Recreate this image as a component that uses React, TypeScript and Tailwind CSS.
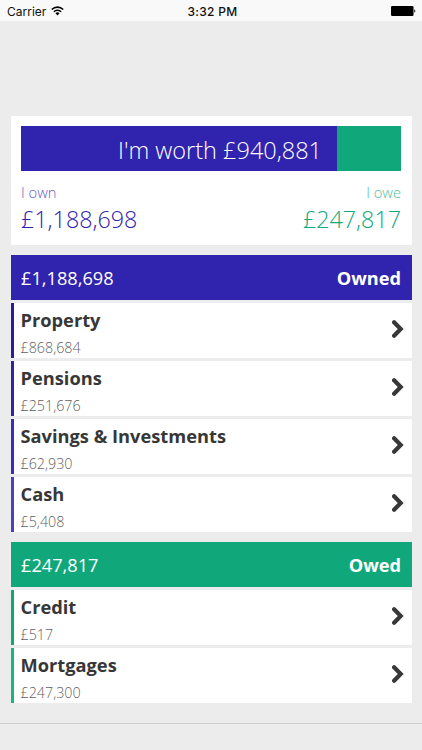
interface Item {
  name: string
  amount: string
  accent: string
}

interface SectionProps {
  total: string
  title: string
  color: string
  items: Item[]
}

const owned: Item[] = [
  { name: "Property", amount: "£868,684", accent: "border-[#2a1c9e]" },
  { name: "Pensions", amount: "£251,676", accent: "border-[#2f21ac]" },
  { name: "Savings & Investments", amount: "£62,930", accent: "border-[#3a2cba]" },
  { name: "Cash", amount: "£5,408", accent: "border-[#4b3fc6]" },
]

const owed: Item[] = [
  { name: "Credit", amount: "£517", accent: "border-[#10a676]" },
  { name: "Mortgages", amount: "£247,300", accent: "border-[#14b884]" },
]

function StatusBar() {
  return (
    <header className="grid h-[21px] shrink-0 grid-cols-3 items-center bg-[#f9f9f9] pr-[6px] pl-[7px] font-['Inter','Roboto',sans-serif] text-[12px] leading-[21px] text-[#111]">
      <div className="flex items-center gap-[5px] pt-px">
        <span>Carrier</span>
        <svg className="-mt-0.5" width="13" height="10" viewBox="0 0 13 10" fill="none" stroke="#000" strokeWidth="1.6">
          <path d="M0.8 3.5a8.1 8.1 0 0 1 11.4 0" />
          <path d="M2.9 5.8a5.1 5.1 0 0 1 7.2 0" />
          <path d="M6.5 9.4 4.5 7.3a2.8 2.8 0 0 1 4 0z" fill="#000" stroke="none" />
        </svg>
      </div>
      <span className="pl-0.5 text-center font-medium tracking-[0.3px]">3:32 PM</span>
      <svg className="justify-self-end" width="25" height="10" viewBox="0 0 25 10">
        <rect width="22.5" height="10" rx="1.2" fill="#000" />
        <path d="M23.3 3.3c1.4.5 1.4 2.9 0 3.4z" fill="#000" />
      </svg>
    </header>
  )
}

function Chevron() {
  return (
    <svg className="-mt-[3px]" width="12" height="18" viewBox="0 0 12 18" fill="none" stroke="#383838" strokeWidth="4.2">
      <path d="M2.1 2.3 8.7 9 2.1 15.7" strokeLinecap="round" strokeLinejoin="miter" />
    </svg>
  )
}

function Summary() {
  return (
    <section className="h-[129px] bg-white px-[10.5px] py-[10px]">
      <div className="flex h-[45px] text-[23.5px] leading-[48px] font-light text-white">
        <div className="w-[315.5px] bg-[#3023ae] pr-[14.5px] text-right whitespace-nowrap">
          I'm worth £940,881
        </div>
        <div className="flex-1 bg-[#10a87a]" />
      </div>
      <div className="mt-[11px] flex justify-between font-light">
        <div className="text-[#3023ae]">
          <div className="text-[14.7px] leading-5 opacity-75">I own</div>
          <div className="mt-px text-[23.3px] leading-8">£1,188,698</div>
        </div>
        <div className="text-right text-[#10a87a]">
          <div className="text-[14.7px] leading-5 opacity-75">I owe</div>
          <div className="mt-px text-[23.3px] leading-8">£247,817</div>
        </div>
      </div>
    </section>
  )
}

function Section({ total, title, color, items }: SectionProps) {
  return (
    <section className="flex flex-col gap-[3px]">
      <div className={`flex h-[45px] items-center justify-between px-[10.5px] pt-[2px] text-[18.2px] text-white ${color}`}>
        <span>{total}</span>
        <span className="font-bold">{title}</span>
      </div>
      {items.map((item) => (
        <div
          key={item.name}
          className={`flex h-[55px] items-center justify-between border-l-[3px] bg-white pr-[8px] pl-[7px] ${item.accent}`}
        >
          <div className="pt-1">
            <div className="text-[18.25px] leading-[25px] font-bold text-[#373737]">{item.name}</div>
            <div className="mt-[6px] text-[14.3px] leading-5 font-light text-[#5f5f5f]">{item.amount}</div>
          </div>
          <Chevron />
        </div>
      ))}
    </section>
  )
}

export default function App() {
  return (
    <div className="flex h-[750px] w-[422px] flex-col overflow-hidden bg-[#ececec] font-['Open_Sans',sans-serif]">
      <StatusBar />
      <main className="flex flex-1 flex-col gap-[10px] px-[10.5px] pt-[95px]">
        <Summary />
        <Section total="£1,188,698" title="Owned" color="bg-[#3023ae]" items={owned} />
        <Section total="£247,817" title="Owed" color="bg-[#10a87a]" items={owed} />
      </main>
      <footer className="h-[27px] shrink-0 border-t border-[#cdcdcd]" />
    </div>
  )
}
